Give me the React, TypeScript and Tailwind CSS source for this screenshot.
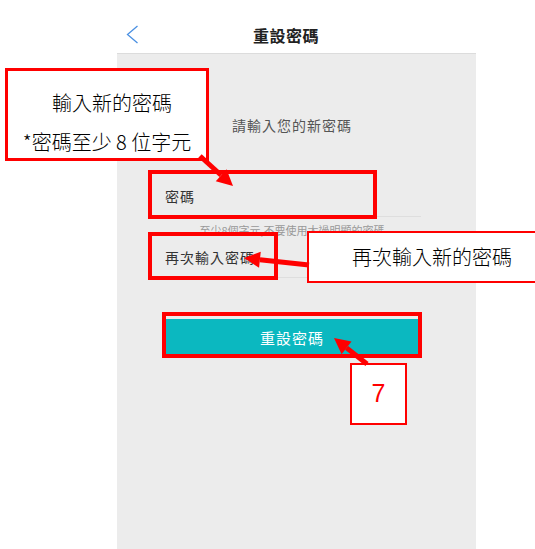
const ui = { fontFamily: '"Noto Sans CJK TC", "Noto Sans", sans-serif' }

function Field({ label }: { label: string }) {
  return (
    <div className="h-[40px] flex items-center border-b border-[#dedede] pl-[2px]">
      <span className="text-[14px] tracking-[1px] text-[#333]">{label}</span>
    </div>
  )
}

function Arrow({ x1, y1, x2, y2 }: { x1: number; y1: number; x2: number; y2: number }) {
  const a = Math.atan2(y2 - y1, x2 - x1)
  const len = 16
  const w = 8
  const bx = x2 - Math.cos(a) * len
  const by = y2 - Math.sin(a) * len
  const px = -Math.sin(a) * w
  const py = Math.cos(a) * w
  return (
    <g>
      <line x1={x1} y1={y1} x2={bx} y2={by} stroke="#ff0000" strokeWidth={5} />
      <polygon points={`${x2},${y2} ${bx + px},${by + py} ${bx - px},${by - py}`} fill="#ff0000" />
    </g>
  )
}

export default function App() {
  return (
    <div className="relative w-[535px] h-[549px] bg-white overflow-hidden" style={ui}>
      {/* phone screen */}
      <div className="ml-[117px] w-[359px] h-full flex flex-col">
        <div className="h-[54px] shrink-0 flex items-center pt-[16px] pl-[9px] pr-[43px] border-b border-[#dcdcdc]">
          <svg width="13" height="19" viewBox="0 0 13 19" className="shrink-0">
            <polyline points="11.5,1 1.5,9.5 11.5,18" fill="none" stroke="#4a90e2" strokeWidth={1.3} />
          </svg>
          <div className="flex-1 text-center text-[16px] font-bold tracking-[0.5px] text-[#222]">
            重設密碼
          </div>
        </div>

        <div className="flex-1 bg-[#ececec] pl-[46px] pr-[55px] pt-[61px]">
          <p className="text-center text-[14px] tracking-[1px] text-[#555] leading-[20px]">請輸入您的新密碼</p>

          <div className="mt-[42px]">
            <Field label="密碼" />
            <p className="text-center text-[11px] text-[#999] leading-[14px] mt-[6px] mb-[1px]">
              至少8個字元,不要使用太過明顯的密碼
            </p>
            <Field label="再次輸入密碼" />
          </div>

          <button className="mt-[41px] w-full h-[38px] bg-[#0bb8c0] text-white text-[15px] tracking-[1px]">
            重設密碼
          </button>
        </div>
      </div>

      {/* annotations */}
      <div className="absolute left-[5px] top-[68px] w-[204px] h-[93px] border-[3px] border-[#ff0000] bg-white flex flex-col items-center text-[20px] font-light text-black leading-[24px]">
        <span className="mt-[20px] ml-[10px]">輸入新的密碼</span>
        <span className="mt-[15px]">*密碼至少 8 位字元</span>
      </div>

      <div className="absolute left-[148px] top-[170px] w-[229px] h-[49px] border-[4px] border-[#ff0000]" />
      <div className="absolute left-[148px] top-[232px] w-[130px] h-[48px] border-[4px] border-[#ff0000]" />
      <div className="absolute left-[162px] top-[312px] w-[260px] h-[46px] border-[4px] border-[#ff0000]" />

      <div className="absolute left-[307px] top-[231px] w-[232px] h-[52px] border-[2px] border-[#ff0000] bg-white flex items-center pl-[43px] text-[20px] font-light text-black">
        再次輸入新的密碼
      </div>

      <div className="absolute left-[350px] top-[363px] w-[57px] h-[62px] border-[2px] border-[#ff0000] bg-white flex items-center justify-center text-[25px] text-[#ff0000]" style={{ fontFamily: '"Liberation Sans", sans-serif' }}>
        7
      </div>

      <svg className="absolute left-0 top-0 pointer-events-none" width={535} height={549}>
        <Arrow x1={200} y1={156} x2={233} y2={186} />
        <Arrow x1={309} y1={265} x2={244} y2={258} />
        <Arrow x1={367} y1={364} x2={334} y2={338} />
      </svg>
    </div>
  )
}
